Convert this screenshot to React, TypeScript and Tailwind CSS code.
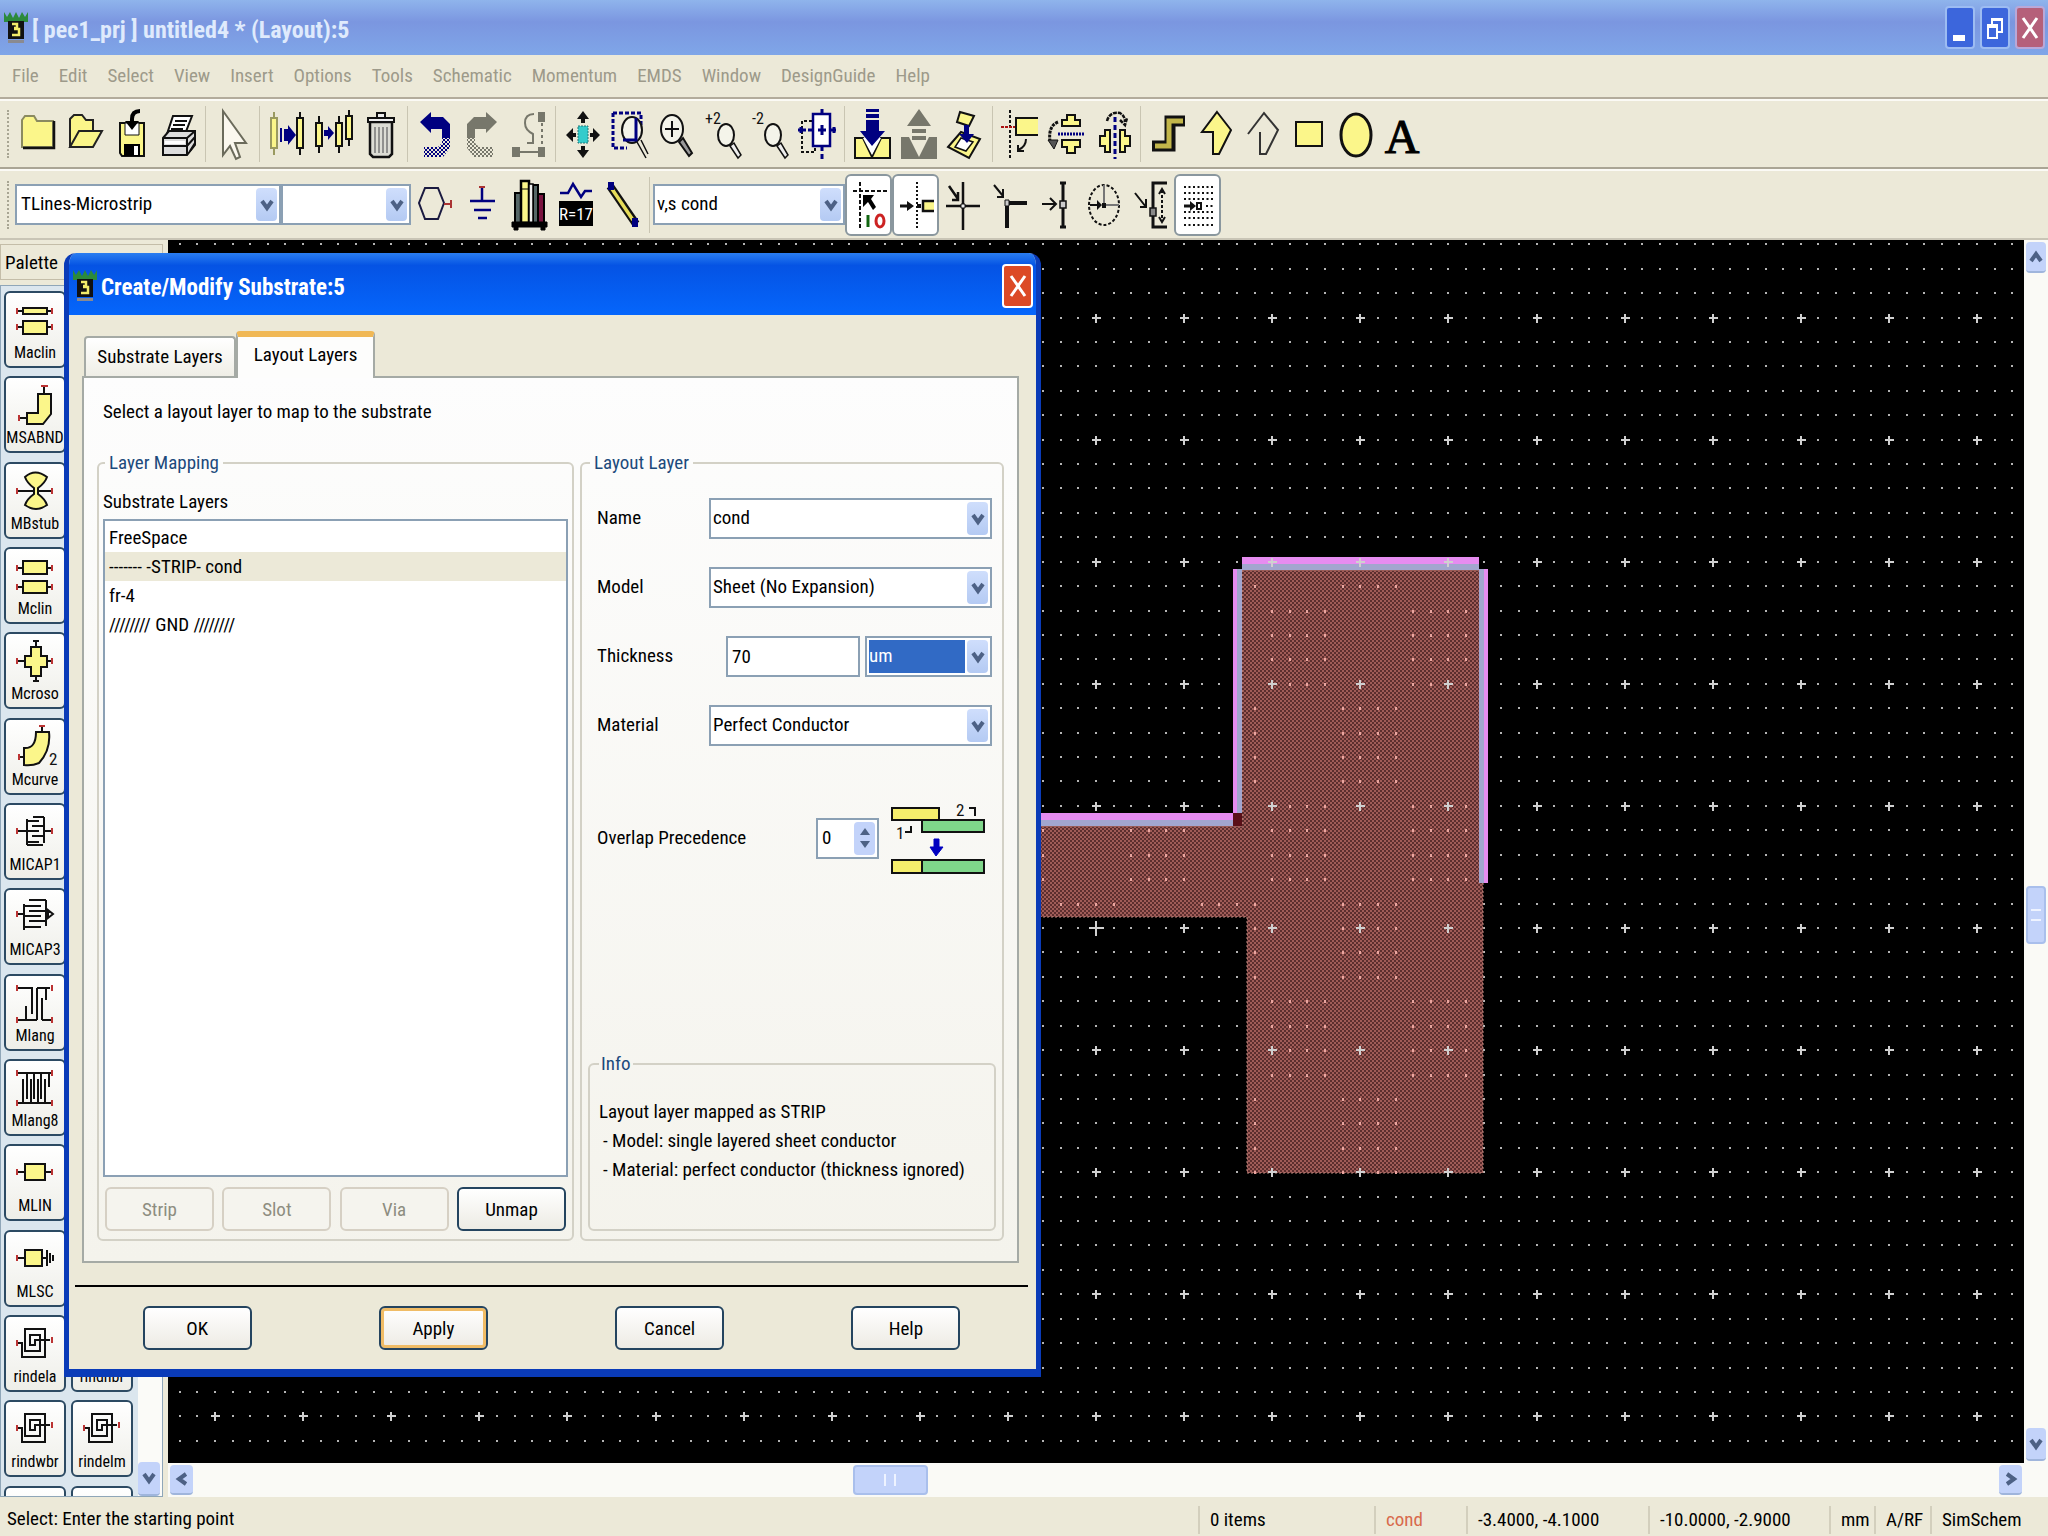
import React from 'react';
import type { ReactNode } from 'react';
import clsx from 'clsx';

const NAVY = '#000080';
const YELLOW = '#fbf68a';
const GREY = '#77776b';

/* ---------- Canvas geometry ---------- */

const STEP_X = 17.62;
const STEP_Y = 24.42;
const ORIGIN_X = 928;
const ORIGIN_Y = 688;

function inMetal(x: number, y: number) {
  const arm = x < 1079 && y > 586 && y < 677;
  const upper = x >= 1074 && x < 1315 && y > 330 && y < 933;
  return arm || upper;
}

function buildGrid() {
  let dots = '';
  let metalDots = '';
  let crosses = '';
  for (let i = -52; i <= 140; i++) {
    for (let j = -28; j <= 60; j++) {
      const x = Math.round(ORIGIN_X + i * STEP_X);
      const y = Math.round(ORIGIN_Y + j * STEP_Y);
      const metal = inMetal(x, y);
      if (i % 5 === 0 && j % 5 === 0) {
        const r = i === 0 && j === 0 ? 7 : 4;
        crosses += `M${x - r} ${y}h${r * 2 + 1}M${x} ${y - r}v${r * 2 + 1}`;
      } else if (metal) {
        const col = Math.floor((i - 10) / 4) % 2 === 0;
        const row = Math.floor((j + 13) / 4) % 2 === 0;
        if (col === row) metalDots += `M${x - 1} ${y - 1}h2v3h-2z`;
      } else {
        dots += `M${x - 1} ${y - 1}h2v2h-2z`;
      }
    }
  }
  return { dots, metalDots, crosses };
}

const GRID = buildGrid();

function LayoutCanvas() {
  return (
    <svg className="block h-full w-full bg-black" role="img" aria-label="Layout view">
      <defs>
        <pattern id="metal" width="4" height="4" patternUnits="userSpaceOnUse">
          <rect width="4" height="4" fill="#5c2e2e" />
          <path d="M0 0h2v2h-2zM2 2h2v2h-2z" fill="#a05c58" />
        </pattern>
        <pattern id="navyDither" width="4" height="4" patternUnits="userSpaceOnUse">
          <path d="M0 0h2v2h-2zM2 2h2v2h-2z" fill={NAVY} />
        </pattern>
        <pattern id="greyDither" width="4" height="4" patternUnits="userSpaceOnUse">
          <path d="M0 0h2v2h-2zM2 2h2v2h-2z" fill={GREY} />
        </pattern>
      </defs>
      <path d={GRID.dots} fill="#b4b4b4" />
      <path
        d="M700 586H1074V330H1315V933H1079V677H700Z"
        fill="url(#metal)"
        stroke="#c08a80"
        strokeDasharray="2 2"
      />
      <path d={GRID.metalDots} fill="#eaa6a0" />
      <path d="M1065 573h9v13h-9z" fill="#5a1018" />
      <path d="M1074 317h237v7h-237zM1065 329h4v244h-4zM700 573h365v7H700zM1316 329h4v314h-4z" fill="#e68cf0" />
      <path d="M1074 324h237v6h-237zM1069 329h5v244h-5zM700 580h365v6H700zM1311 329h5v314h-5z" fill="#a2a6cf" />
      <path d={GRID.crosses} stroke="#d0d0d0" strokeWidth="2" fill="none" />
    </svg>
  );
}

/* ---------- Toolbar icons, each on a 44 x 50 field ---------- */

function Lens({ x, y, rx, ry }: { x: number; y: number; rx: number; ry: number }) {
  return <ellipse cx={x} cy={y} rx={rx} ry={ry} fill="#f4f4ea" stroke="#111" strokeWidth="2" />;
}

const ICONS: Record<string, ReactNode> = {
  new: (
    <>
      <path d="M6 38V11l3-4h9l3 5h16v26z" fill={YELLOW} stroke="#8a8a60" strokeWidth="2" />
      <path d="M7 39h31V12" stroke="#111" strokeWidth="2.5" />
    </>
  ),
  open: (
    <>
      <path d="M7 38V10l4-4h8l4 5h7v10" fill={YELLOW} stroke="#222" strokeWidth="2" />
      <path d="M7 38L16 22H39L30 38Z" fill={YELLOW} stroke="#222" strokeWidth="2" />
    </>
  ),
  save: (
    <>
      <path d="M10 14h24v33H12l-2-3z" fill={YELLOW} stroke="#111" strokeWidth="2" />
      <path d="M15 14h14v12H15z" fill="#fff" stroke="#111" strokeWidth="1" />
      <path d="M14 35h16v12H14z" fill="#000" />
      <path d="M24 37h4v9h-4z" fill="#fff" />
      <path d="M30 2q-8 0-8 8v4" stroke="#000" strokeWidth="4" />
      <path d="M15 12h14l-7 9z" fill="#000" />
    </>
  ),
  print: (
    <>
      <path d="M16 7h19l-7 18H10z" fill="#fff" stroke="#111" strokeWidth="2" />
      <path d="M18 12h12M16 16h12M14 20h12" stroke="#111" strokeWidth="2" />
      <path d="M6 29l6-7h26v14l-8 10H6z" fill="#ddd" stroke="#111" strokeWidth="2" />
      <path d="M6 29h24l8-7M30 29v17M6 37h24l8-9M33 42l5-8" stroke="#111" strokeWidth="2" />
      <path d="M8 32h20v3H8z" fill="#fff" />
    </>
  ),
  select: <path d="M12 2V46l7-9 6 13 4-2-5-14h11z" fill="#fbf8ee" stroke="#6b6b5b" strokeWidth="2" />,
  move: (
    <>
      <path d="M9 3v43" stroke="#9a9a60" strokeWidth="2" />
      <path d="M6 9h6v30H6z" fill={YELLOW} stroke="#9a9a60" strokeWidth="2" />
      <path d="M35 3v43" stroke="#111" strokeWidth="2" />
      <path d="M32 9h6v30h-6z" fill={YELLOW} stroke="#111" strokeWidth="2" />
      <path d="M15 19h2v14h-2zM19 20h4v-4l8 10-8 10v-4h-4z" fill={NAVY} />
    </>
  ),
  copy: (
    <>
      <path d="M7 7v37M27 7v37M37 1v36" stroke="#111" strokeWidth="2" />
      <path d="M4 14h6v23H4zM24 14h6v23h-6zM34 7h6v23h-6z" fill={YELLOW} stroke="#111" strokeWidth="2" />
      <path d="M12 21h4v-4l6 7-6 7v-4h-4z" fill={NAVY} />
    </>
  ),
  trash: (
    <>
      <path d="M11 13h22v32l-3 3H14l-3-3z" fill="#dcdcd4" stroke="#111" strokeWidth="2.5" />
      <path d="M9 9h26v4H9zM18 8V4h8v4" fill="#eee" stroke="#111" strokeWidth="2" />
      <path d="M16 18v26M20 18v26M24 18v26M28 18v26" stroke="#777" strokeWidth="1.5" />
    </>
  ),
  undo: (
    <>
      <path d="M7 13L18 3v5h12l7 7v14h-8v-9H18v4z" fill={NAVY} />
      <path d="M29 28h8v11l-7 9H11V38h14l4-4z" fill="url(#navyDither)" />
    </>
  ),
  redo: (
    <>
      <path d="M37 13L26 3v5H14l-7 7v14h8v-9h11v4z" fill={GREY} />
      <path d="M15 28H7v11l7 9h19V38H19l-4-4z" fill="url(#greyDither)" />
    </>
  ),
  swap: (
    <>
      <path d="M31 3h7v10h-7zM5 38h8v10H5zM31 38h7v10h-7zM13 42h18v2H13z" fill={GREY} />
      <path d="M35 14v24" stroke={GREY} strokeWidth="2" strokeDasharray="3 3" />
      <path d="M27 5q-9 0-9 9 0 7 8 11v9M20 34h6v-7" stroke={GREY} strokeWidth="2" />
    </>
  ),
  fit: (
    <>
      <path d="M17 17h10v17H17z" fill="#3cc" stroke="#277" strokeWidth="1" strokeDasharray="2 1" />
      <path d="M22 2l6 8h-4v4h-4v-4h-4zM22 49l6-8h-4v-4h-4v4h-4zM5 26l7-7v5h3v4h-3v5zM39 26l-7-7v5h-3v4h3v5z" fill="#111" />
    </>
  ),
  zoomArea: (
    <>
      <path d="M5 4h28v12M5 4v35h14" stroke={NAVY} strokeWidth="3" strokeDasharray="4 2" />
      <Lens x={24} y={21} rx={10} ry={13} />
      <path d="M28 9v22H15" stroke={NAVY} strokeWidth="3" />
      <path d="M29 33l9 16M33 31l7 14" stroke="#111" strokeWidth="1.5" />
    </>
  ),
  zoomIn: (
    <>
      <Lens x={17} y={20} rx={11} ry={14} />
      <path d="M10 20h14M17 12v16" stroke="#111" strokeWidth="2" />
      <path d="M24 33l10 14 3-3-9-15z" fill="#999" stroke="#111" strokeWidth="2" />
    </>
  ),
  zoomPlus2: (
    <>
      <text x="3" y="15" fontSize="16" fill="#111">+2</text>
      <Lens x={24} y={26} rx={8} ry={11} />
      <path d="M28 37l8 12 3-3-7-12z" fill="#eee" stroke="#111" strokeWidth="1.5" />
    </>
  ),
  zoomMinus2: (
    <>
      <text x="3" y="15" fontSize="16" fill="#111">-2</text>
      <Lens x={24} y={26} rx={8} ry={11} />
      <path d="M28 37l8 12 3-3-7-12z" fill="#eee" stroke="#111" strokeWidth="1.5" />
    </>
  ),
  pan: (
    <>
      <path d="M16 12H6v31h13v-6" stroke="#111" strokeWidth="2" strokeDasharray="3 2" />
      <path d="M17 5h17v32H17z" fill="#fff" stroke={NAVY} strokeWidth="2.5" />
      <path d="M2 21h8M12 21h5M22 21h8M34 21h6M26 16v10M26 0v5M26 38v4M26 45v5M5 18v6M38 18v6" stroke={NAVY} strokeWidth="3" />
    </>
  ),
  push: (
    <>
      <path d="M5 29h8l9 19 9-19h9v20H5z" fill={YELLOW} stroke="#111" strokeWidth="2" />
      <path d="M13 29h18l-9 17z" fill="#fff" />
      <path d="M16 0h13v3H16zM16 5h13v4H16zM16 11h13v11h6L22 37 10 22h6z" fill={NAVY} />
    </>
  ),
  pop: (
    <>
      <path d="M4 28h8l10 20 10-20h8v22H4z" fill={GREY} />
      <path d="M22 0l12 17H10zM15 20h14v4H15zM15 27h14v4H15z" fill={GREY} />
    </>
  ),
  peek: (
    <>
      <path d="M17 23l19 7-11 19L4 38z" fill={YELLOW} stroke="#111" strokeWidth="2" />
      <path d="M17 29l12 4-7 9-11-4z" fill="#fff" stroke="#111" strokeWidth="1.5" />
      <path d="M16 3l14 4-5 10-12-4z" fill={YELLOW} stroke="#111" strokeWidth="2" />
      <path d="M20 16h5v9h5l-7 9-8-9h5z" fill={NAVY} />
    </>
  ),
  rotate: (
    <>
      <path d="M12 1v48" stroke="#111" strokeWidth="2" strokeDasharray="3 2" />
      <path d="M40 9H18v17h22" fill={YELLOW} stroke="#111" strokeWidth="2" />
      <path d="M3 18h14" stroke="#a11" strokeWidth="2" strokeDasharray="3 1" />
      <path d="M28 30q0 8-8 11M20 36v6h6" stroke="#111" strokeWidth="2" />
    </>
  ),
  flipV: (
    <>
      <path d="M22 6h8v5h5v6H17v-6h5zM17 31h18v7h-5v6h-8v-6h-5z" fill={YELLOW} stroke="#111" strokeWidth="2" />
      <path d="M13 25h27" stroke={NAVY} strokeWidth="3" strokeDasharray="2 1" />
      <path d="M13 13Q3 17 5 32" stroke="#111" strokeWidth="3" strokeDasharray="3 1" />
      <path d="M3 31h10l-4 9z" fill="#555" stroke="#111" />
    </>
  ),
  flipH: (
    <>
      <path d="M18 21v22h-5v-6H8V27h5v-6zM28 21v22h5v-6h5V27h-5v-6z" fill={YELLOW} stroke="#111" strokeWidth="2" />
      <path d="M23 8v42" stroke={NAVY} strokeWidth="3" strokeDasharray="5 3" />
      <path d="M15 12Q18 2 28 4q5 3 5 9M28 11l5 5 2-7" stroke="#111" strokeWidth="2.5" strokeDasharray="4 1" />
    </>
  ),
  trace: (
    <>
      <path d="M39 12H24v25H6" stroke="#111" strokeWidth="11" />
      <path d="M37 12H23v25H9" stroke="#c2b64a" strokeWidth="5" />
    </>
  ),
  polygon: <path d="M24 3L38 21 26 45h-6V23H9z" fill={YELLOW} stroke="#111" strokeWidth="2" />,
  polyline: <path d="M8 25L24 4 38 21 26 45h-6V23" stroke="#333" strokeWidth="2" />,
  rectangle: <path d="M9 13h26v24H9z" fill={YELLOW} stroke="#111" strokeWidth="2" />,
  circle: <ellipse cx="22" cy="26" rx="15" ry="21" fill={YELLOW} stroke="#111" strokeWidth="3" />,
  text: (
    <text x="21" y="44" fontSize="48" textAnchor="middle" fill="#000" stroke="#000" className='font-["Liberation_Serif",serif]'>
      A
    </text>
  ),
  port: (
    <>
      <path d="M12 8h13l6 15-6 16H12L6 23z" stroke="#1a1a40" strokeWidth="2" />
      <path d="M31 24h7M38 20v8" stroke="#a33" strokeWidth="2" />
    </>
  ),
  ground: (
    <>
      <path d="M22 7v14M10 21h25M14 30h17M18 38h9" stroke={NAVY} strokeWidth="2.5" />
      <path d="M19 7h6" stroke="#a33" strokeWidth="2" />
    </>
  ),
  library: (
    <>
      <path d="M8 13h6v30H8zM26 5h5v38h-5z" fill="#566" stroke="#000" strokeWidth="2" />
      <path d="M14 1h8v42h-8z" fill={YELLOW} stroke="#000" strokeWidth="2.5" />
      <path d="M22 4h4v39h-4z" fill="#eee" stroke="#000" strokeWidth="1.5" />
      <path d="M31 14h6v29h-6z" fill="#7a1440" stroke="#000" strokeWidth="2" />
      <path d="M14 9h8M5 42h35v5H5zM7 47h4v3H7zM34 47h4v3h-4z" fill="#000" stroke="#000" />
    </>
  ),
  variable: (
    <>
      <path d="M6 13h8l5-9 8 13 4-6h7" stroke={NAVY} strokeWidth="2.5" />
      <path d="M5 21h34v25H5z" fill="#000" />
      <text x="22" y="40" fontSize="17" textAnchor="middle" fill="#fff">R=17</text>
    </>
  ),
  wire: (
    <>
      <path d="M9 6l26 38" stroke="#111" strokeWidth="8" />
      <path d="M11 9l21 31" stroke="#e6dc5a" strokeWidth="3.5" />
      <path d="M7 2h6v8H7zM31 38h6v9h-6z" fill={NAVY} />
    </>
  ),
  snap: (
    <>
      <path d="M13 2v48M6 11h36" stroke="#111" strokeWidth="2" strokeDasharray="4 2" />
      <path d="M16 15h11l-3 4 5 8-3 3-5-8-5 5z" fill="#000" />
      <path d="M21 35v12" stroke="#161" strokeWidth="3" />
      <ellipse cx="33" cy="41" rx="4" ry="6" stroke="#c22" strokeWidth="3" />
    </>
  ),
  snapPin: (
    <>
      <path d="M23 2v48" stroke="#111" strokeWidth="2" strokeDasharray="2 2" />
      <path d="M6 26h10" stroke="#111" strokeWidth="3" />
      <path d="M13 21l7 5-7 5zM23 24h4v4h-4z" fill="#111" />
      <path d="M40 21H29v10h11" fill={YELLOW} stroke="#111" strokeWidth="2.5" />
    </>
  ),
  snapMid: (
    <>
      <path d="M22 2v48M5 26h34M8 6l9 13M17 12v8h-6" stroke="#111" strokeWidth="2.5" />
      <path d="M20 24h4v4h-4z" fill="#eee" stroke="#111" />
    </>
  ),
  snapVertex: (
    <>
      <path d="M19 48V23h20" stroke="#111" strokeWidth="4" />
      <path d="M6 5l9 11M15 9v8H9" stroke="#111" strokeWidth="2" />
      <path d="M17 20h4v6h-4z" fill="#ccc" stroke="#111" />
    </>
  ),
  snapEdge: (
    <>
      <path d="M28 3v44M25 3h6M25 47h6" stroke="#111" strokeWidth="3" />
      <path d="M7 24h13M15 18l6 6-6 6" stroke="#111" strokeWidth="2" />
      <path d="M25 21h6v7h-6z" fill="#ccc" stroke="#111" strokeWidth="1.5" />
    </>
  ),
  snapArc: (
    <>
      <ellipse cx="22" cy="25" rx="15" ry="20" stroke="#111" strokeWidth="2" strokeDasharray="3 2" />
      <path d="M22 5v20h15" stroke="#777" strokeWidth="2" />
      <path d="M8 24h7v-4l5 5-5 5v-4H8zM20 23h4v5h-4z" fill="#111" />
    </>
  ),
  snapMeasure: (
    <>
      <path d="M38 3H24v44h14" stroke="#111" strokeWidth="3" />
      <path d="M33 10v30" stroke="#111" strokeWidth="2" strokeDasharray="3 2" />
      <path d="M30 14l3-5 3 5M30 37l3 5 3-5M6 13l11 14M17 19v8h-6" stroke="#111" strokeWidth="2" />
      <path d="M21 28h6v8h-6z" fill="#888" stroke="#111" strokeWidth="1.5" />
    </>
  ),
  snapGrid: (
    <>
      <path
        d="M8 7h29M8 13h29M8 19h29M8 32h29M8 38h29M8 45h29M30 26h7"
        stroke="#111"
        strokeWidth="2"
        strokeDasharray="2 2.5"
      />
      <path d="M8 26h8" stroke="#111" strokeWidth="3" />
      <path d="M14 21l6 5-6 5z" fill="#111" />
      <path d="M21 23h4v6h-4z" stroke="#111" strokeWidth="2" />
    </>
  ),
};

function ToolButton({ name, active = false }: { name: string; active?: boolean }) {
  return (
    <button
      type="button"
      aria-label={name}
      className={clsx(
        'flex w-[47px] shrink-0 items-center justify-center',
        active && 'h-[62px] rounded-md border-2 border-[#8a979e] bg-white',
      )}
    >
      <svg width="44" height="50" viewBox="0 0 44 50" fill="none" className="shrink-0 overflow-visible">
        {ICONS[name]}
      </svg>
    </button>
  );
}

function Separator() {
  return <span className="mx-[3px] h-14 w-px shrink-0 bg-[#c9c5b2]" />;
}

function Grip() {
  return <span className="ml-[7px] h-12 w-0 shrink-0 border-l-2 border-dotted border-[#a8a593]" />;
}

const MAIN_TOOLS = [
  ['new', 'open', 'save', 'print'],
  ['select'],
  ['move', 'copy', 'trash'],
  ['undo', 'redo', 'swap'],
  ['fit', 'zoomArea', 'zoomIn', 'zoomPlus2', 'zoomMinus2', 'pan'],
  ['push', 'pop', 'peek'],
  ['rotate', 'flipV', 'flipH'],
  ['trace', 'polygon', 'polyline', 'rectangle', 'circle', 'text'],
];

/* ---------- Shared controls ---------- */

function Chevron({ className }: { className?: string }) {
  return (
    <svg width="14" height="14" viewBox="0 0 14 14" fill="none" className={className}>
      <path d="M2 3l5 7 5-7" stroke="#4d6185" strokeWidth="4" />
    </svg>
  );
}

function Combo({
  id,
  label,
  value,
  className,
  selected = false,
}: {
  id: string;
  label?: string;
  value: string;
  className?: string;
  selected?: boolean;
}) {
  return (
    <div className={clsx('flex h-[41px] border-2 border-[#8ba0b4] bg-white p-0.5', className)}>
      <select
        id={id}
        aria-label={label}
        defaultValue={value}
        className={clsx('min-w-0 flex-1 appearance-none outline-none', selected && 'bg-[#316ac5] text-white')}
      >
        <option>{value}</option>
      </select>
      <span className="ml-0.5 flex w-[21px] items-center justify-center rounded-sm bg-linear-to-b from-[#cfdefc] to-[#b4caf3]">
        <Chevron />
      </span>
    </div>
  );
}

function ScrollButton({ label, turn, className }: { label: string; turn?: string; className?: string }) {
  return (
    <button
      type="button"
      aria-label={label}
      className={clsx(
        'flex shrink-0 items-center justify-center rounded-sm border-b-2 border-[#9fb5dc] bg-[#c3d3fa]',
        className,
      )}
    >
      <Chevron className={turn} />
    </button>
  );
}

function PushButton({ children, disabled, focused }: { children: ReactNode; disabled?: boolean; focused?: boolean }) {
  return (
    <button
      type="button"
      disabled={disabled}
      className={clsx(
        'h-11 w-[109px] rounded-md border-2 pt-0.5',
        disabled && 'border-[#d6d0c4] bg-[#f5f4ee] text-[#8d8d80]',
        !disabled && 'border-[#24445f] bg-linear-to-b from-white to-[#edebe4]',
        focused && 'border-[#6b5a33] shadow-[inset_0_0_0_3px_#f0bc66]',
      )}
    >
      {children}
    </button>
  );
}

function Logo() {
  return (
    <svg width="24" height="34" viewBox="0 0 24 34" fill="none" className="shrink-0">
      <path d="M0 1l3 5 3-5 3 6 3-6 3 6 3-6 3 5 3-5v10H0z" fill="#2c8a3c" />
      <path d="M4 10h16v18H4z" fill="#111" />
      <path d="M8 13h5v4h-3M10 18h5v6H8" stroke="#f3ec6a" strokeWidth="2.5" />
      <path d="M4 29h16v3H4z" fill="#8a8a90" />
    </svg>
  );
}

/* ---------- Window chrome ---------- */

function TitleBar() {
  return (
    <header className="flex h-[55px] shrink-0 items-center bg-linear-to-b from-[#8fb4ec] via-[#7b96e0] via-40% to-[#7fa6e8] pr-[3px] pl-1">
      <Logo />
      <h1 className="ml-1 flex-1 pt-1 text-[24px] font-bold text-[#dfeafc]">[ pec1_prj ] untitled4 * (Layout):5</h1>
      <div className="flex gap-[5px]">
        <button type="button" aria-label="Minimize" className="h-[43px] w-[30px] rounded border-2 border-[#9dbcf2] bg-[#3c66dc]">
          <span className="mt-5 ml-1.5 block h-1.5 w-3 bg-white" />
        </button>
        <button
          type="button"
          aria-label="Restore"
          className="flex h-[43px] w-[30px] items-center justify-center rounded border-2 border-[#9dbcf2] bg-[#3c66dc]"
        >
          <svg width="18" height="24" viewBox="0 0 18 24" fill="none" stroke="#fff" strokeWidth="2">
            <path d="M6 8V3h10v13h-4M6 4h10M2 9h9v13H2zM2 11h9" />
          </svg>
        </button>
        <button
          type="button"
          aria-label="Close"
          className="flex h-[43px] w-[30px] items-center justify-center rounded border-2 border-[#b9a8d8] bg-[#b5607a]"
        >
          <CloseGlyph />
        </button>
      </div>
    </header>
  );
}

function CloseGlyph() {
  return (
    <svg width="18" height="24" viewBox="0 0 18 24" fill="none" stroke="#fff" strokeWidth="3">
      <path d="M2 2l14 20M16 2L2 22" />
    </svg>
  );
}

const MENUS = [
  'File', 'Edit', 'Select', 'View', 'Insert', 'Options', 'Tools', 'Schematic',
  'Momentum', 'EMDS', 'Window', 'DesignGuide', 'Help',
];

function MenuBar() {
  return (
    <nav className="flex h-11 shrink-0 items-center gap-5 border-b-2 border-[#b3ac9c] pl-3 text-[#9d9a8a]">
      {MENUS.map((m) => (
        <button key={m} type="button">
          {m}
        </button>
      ))}
    </nav>
  );
}

function Toolbars() {
  return (
    <>
      <div className="flex h-[70px] shrink-0 items-center border-t-2 border-b-2 border-t-[#fbfaf5] border-b-[#aaa595]">
        <Grip />
        <span className="w-[5px]" />
        {MAIN_TOOLS.map((group, i) => (
          <React.Fragment key={group[0]}>
            {i > 0 && <Separator />}
            {group.map((t) => (
              <ToolButton key={t} name={t} />
            ))}
          </React.Fragment>
        ))}
      </div>
      <div className="flex h-[71px] shrink-0 items-center border-t-2 border-b-2 border-t-[#fbfaf5] border-b-[#c9c5b6]">
        <Grip />
        <Combo id="palette-group" label="Palette" value="TLines-Microstrip" className="ml-1.5 w-[266px] shrink-0 pl-1" />
        <Combo id="component" label="Component" value="" className="w-[130px] shrink-0" />
        <div className="flex shrink-0">
          {['port', 'ground', 'library', 'variable', 'wire'].map((t) => (
            <ToolButton key={t} name={t} />
          ))}
        </div>
        <Separator />
        <Combo id="entry-layer" label="Entry layer" value="v,s cond" className="w-[192px] shrink-0" />
        <ToolButton name="snap" active />
        <ToolButton name="snapPin" active />
        <div className="flex shrink-0 gap-0 pr-0">
          {['snapMid', 'snapVertex', 'snapEdge', 'snapArc', 'snapMeasure'].map((t) => (
            <ToolButton key={t} name={t} />
          ))}
        </div>
        <ToolButton name="snapGrid" active />
      </div>
    </>
  );
}

/* ---------- Component palette, each glyph on a 40 x 44 field ---------- */

function Leads({ y, left = 8, right = 32 }: { y: number; left?: number; right?: number }) {
  return (
    <>
      <path d={`M3 ${y}H${left}M${right} ${y}H37`} stroke="#111" strokeWidth="2" />
      <path d={`M2 ${y - 3}v6M37 ${y - 3}v6`} stroke="#b33" strokeWidth="2" />
    </>
  );
}

const box = { fill: YELLOW, stroke: '#111', strokeWidth: 2 };
const line = { stroke: '#111', strokeWidth: 2 };

const spiral = (
  <>
    <path d="M3 22H7V36H30V8H10V30H25V14H15V24H20V19H35" {...line} />
    <path d="M2 19v6M37 16v6" stroke="#b33" strokeWidth="2" />
  </>
);

const GLYPHS: Record<string, ReactNode> = {
  Maclin: (
    <>
      <Leads y={14} />
      <Leads y={30} />
      <path d="M8 11h24v6H8zM8 24h24v13H8z" {...box} />
    </>
  ),
  MSABND: (
    <>
      <path d="M23 12h13v20l-8 10H12V31h11z" {...box} />
      <path d="M29 4v8M4 36h8" {...line} />
      <path d="M26 4h7M4 33v6" stroke="#b33" strokeWidth="2" />
    </>
  ),
  MBstub: (
    <>
      <Leads y={23} left={18} right={22} />
      <path d="M10 9q10-9 22 0-2 6-9 11v6q7 5 9 11-11 8-22 0 2-6 9-11v-6q-7-5-9-11z" {...box} />
    </>
  ),
  Mclin: (
    <>
      <Leads y={15} />
      <Leads y={34} />
      <path d="M8 8h24v13H8zM8 28h24v12H8z" {...box} />
    </>
  ),
  Mcroso: (
    <>
      <Leads y={23} left={11} right={31} />
      <path d="M16 9h10v9h6v11h-6v9H16v-9h-6V18h6z" {...box} />
      <path d="M21 3v6M21 38v5M18 3h6M18 43h6" {...line} />
    </>
  ),
  Mcurve: (
    <>
      <path d="M21 8h13q2 18-10 31-7 3-15 2V24q12 1 12-16z" {...box} />
      <path d="M27 2v6M4 33h5" {...line} />
      <path d="M24 2h6M4 30v6" stroke="#b33" strokeWidth="2" />
      <text x="34" y="41" fontSize="17" fill="#111">2</text>
    </>
  ),
  MICAP1: (
    <>
      <Leads y={22} left={12} right={29} />
      <path d="M12 10v26M29 8v26M12 12h12M17 17h12M12 22h12M17 27h12M12 33h12M18 8h11M12 36h16" {...line} />
    </>
  ),
  MICAP3: (
    <>
      <path d="M3 20h6M9 10v26M31 6v26M14 6h17M9 12h17M14 17h17M9 22h17M14 27h17M9 33h17M31 20h2M33 16v8l5-4z" {...line} />
      <path d="M2 17v6" stroke="#b33" strokeWidth="2" />
    </>
  ),
  Mlang: (
    <>
      <path d="M3 8h14v26M22 40V8M22 8h13M3 40h19M27 40h9M11 40V26M27 40V18M31 8v12" {...line} />
      <path d="M2 5v6M37 5v6M2 37v6M37 37v6" stroke="#b33" strokeWidth="2" />
    </>
  ),
  Mlang8: (
    <>
      <path d="M3 8h34M3 38h34M8 38V14M12 8v26M16 38V14M19 8v26M23 38V14M26 8v26M30 38V14M34 8v14" {...line} />
      <path d="M2 5v6M37 5v6M2 35v6M37 35v6" stroke="#b33" strokeWidth="2" />
    </>
  ),
  MLIN: (
    <>
      <Leads y={22} left={10} right={30} />
      <path d="M10 14h20v16H10z" {...box} />
    </>
  ),
  MLSC: (
    <>
      <path d="M3 22h7M28 22h4M32 14v16M35 17v10M38 19v6" {...line} />
      <path d="M2 19v6" stroke="#b33" strokeWidth="2" />
      <path d="M10 14h17v16H10z" {...box} />
    </>
  ),
  rindela: spiral,
  rindnbr: spiral,
  rindwbr: spiral,
  rindelm: spiral,
};

const PALETTE_ROWS: [string, string?][] = [
  ['Maclin'], ['MSABND'], ['MBstub'], ['Mclin'], ['Mcroso'], ['Mcurve'], ['MICAP1'], ['MICAP3'],
  ['Mlang'], ['Mlang8'], ['MLIN'], ['MLSC'], ['rindela', 'rindnbr'], ['rindwbr', 'rindelm'], ['', ''],
];

function PaletteButton({ name }: { name: string }) {
  return (
    <button
      type="button"
      aria-label={name || 'More'}
      className="flex h-[77px] w-[62px] flex-col items-center rounded-md border-2 border-[#2c4a63] bg-linear-to-b from-white to-[#eeeee8] pt-1 text-[16px] leading-6"
    >
      <svg width="40" height="44" viewBox="0 0 40 44" fill="none" className="shrink-0 overflow-visible">
        {GLYPHS[name]}
      </svg>
      {name}
    </button>
  );
}

function Palette() {
  return (
    <aside className="flex w-[168px] shrink-0 flex-col overflow-hidden">
      <h2 className="mt-1 mr-[5px] mb-[5px] flex h-9 shrink-0 items-center border border-[#c4bda8] pt-0.5 pl-1">Palette</h2>
      <div className="mr-[5px] flex min-h-0 flex-1 border border-[#8fa6b8] bg-[#dbe6ee]">
        <div className="h-full flex-1 overflow-hidden pt-[5px] pl-[3px]">
          <div className="flex h-[1272px] flex-col justify-between">
            {PALETTE_ROWS.map((row, i) => (
              <div key={i} className="flex gap-[5px]">
                {row.map((name, j) => (
                  <PaletteButton key={j} name={name ?? ''} />
                ))}
              </div>
            ))}
          </div>
        </div>
        <div className="flex w-6 flex-col justify-end bg-[#fbfbf8]">
          <ScrollButton label="Scroll palette down" className="h-[34px] w-[22px]" />
        </div>
      </div>
    </aside>
  );
}

/* ---------- Substrate dialog ---------- */

const GROUP = 'min-w-0 rounded-md border-2 border-[#d3d1c6]';
const LEGEND = 'ml-0.5 px-1 leading-6 text-[#1c4a7c]';

function OverlapDiagram() {
  return (
    <svg width="94" height="74" viewBox="0 0 94 74" fill="none" className="overflow-visible">
      <path d="M1 7h47v12H1zM1 59h31v13H1z" fill="#f5ee6c" stroke="#111" strokeWidth="2" />
      <path d="M31 19h62v12H31zM31 59h62v13H31z" fill="#7fd68a" stroke="#111" strokeWidth="2" />
      <path d="M43 38h5v8h4l-7 9-6-9h4z" fill="#0000c0" stroke="#0000c0" />
      <text x="5" y="38" fontSize="17" fill="#111">1</text>
      <text x="65" y="15" fontSize="17" fill="#111">2</text>
      <path d="M14 31h6v-6M78 7h6v8" stroke="#111" strokeWidth="2" />
    </svg>
  );
}

function LayerMapping() {
  const layers = ['FreeSpace', '------- -STRIP- cond', 'fr-4', '//////// GND ////////'];
  return (
    <fieldset className={clsx(GROUP, 'w-[477px] px-1 pb-2')}>
      <legend className={LEGEND}>Layer Mapping</legend>
      <p id="layers-label" className="pt-3 leading-[29px]">Substrate Layers</p>
      <ul aria-labelledby="layers-label" className="mt-[3px] h-[658px] border-2 border-[#8ba0b4] bg-white py-0.5">
        {layers.map((l, i) => (
          <li key={l} className={clsx('px-1 leading-[29px]', i === 1 && 'bg-[#ece9d8]')}>
            {l}
          </li>
        ))}
      </ul>
      <div className="mt-2.5 flex justify-between px-0.5">
        <PushButton disabled>Strip</PushButton>
        <PushButton disabled>Slot</PushButton>
        <PushButton disabled>Via</PushButton>
        <PushButton>Unmap</PushButton>
      </div>
    </fieldset>
  );
}

function Field({ label, id, children }: { label: string; id: string; children: ReactNode }) {
  return (
    <div className="flex items-center justify-between">
      <label htmlFor={id}>{label}</label>
      {children}
    </div>
  );
}

function LayoutLayer() {
  return (
    <fieldset className={clsx(GROUP, 'flex flex-1 flex-col px-1.5 pb-2')}>
      <legend className={LEGEND}>Layout Layer</legend>
      <div className="flex flex-col gap-7 pt-[23px] pr-1 pl-[9px]">
        <Field label="Name" id="layer-name">
          <Combo id="layer-name" value="cond" className="w-[283px]" />
        </Field>
        <Field label="Model" id="layer-model">
          <Combo id="layer-model" value="Sheet (No Expansion)" className="w-[283px]" />
        </Field>
        <Field label="Thickness" id="layer-thickness">
          <div className="flex gap-[5px]">
            <input
              id="layer-thickness"
              type="text"
              defaultValue="70"
              className="h-[41px] w-[134px] border-2 border-[#8ba0b4] bg-white px-1"
            />
            <Combo id="layer-unit" label="Thickness unit" value="um" selected className="w-[127px]" />
          </div>
        </Field>
        <Field label="Material" id="layer-material">
          <Combo id="layer-material" value="Perfect Conductor" className="w-[283px]" />
        </Field>
      </div>
      <div className="mt-[55px] flex items-center pr-[11px] pl-[9px]">
        <label htmlFor="precedence" className="flex-1">Overlap Precedence</label>
        <div className="mr-3 flex h-[41px] w-[63px] border-2 border-[#8ba0b4] bg-white p-0.5">
          <input id="precedence" type="text" defaultValue="0" className="w-[34px] pl-0.5" />
          <span className="flex flex-1 flex-col items-center justify-center gap-1 rounded-sm bg-[#c3d3fa] text-[#4d6185]">
            <svg width="12" height="9" viewBox="0 0 12 9"><path d="M1 8l5-7 5 7z" fill="currentColor" /></svg>
            <svg width="12" height="9" viewBox="0 0 12 9"><path d="M1 1l5 7 5-7z" fill="currentColor" /></svg>
          </span>
        </div>
        <OverlapDiagram />
      </div>
      <fieldset className={clsx(GROUP, 'mt-auto h-[179px] px-[9px] pt-[21px]')}>
        <legend className="px-0.5 leading-6 text-[#1c4a7c]">Info</legend>
        <p className="leading-[29px]">Layout layer mapped as STRIP</p>
        <p className="pl-1 leading-[29px]">- Model: single layered sheet conductor</p>
        <p className="pl-1 leading-[29px]">- Material: perfect conductor (thickness ignored)</p>
      </fieldset>
    </fieldset>
  );
}

function SubstrateDialog() {
  return (
    <section
      role="dialog"
      aria-labelledby="dialog-title"
      className="absolute top-[253px] left-16 w-[977px] overflow-hidden rounded-t-xl border-x-[5px] border-b-8 border-[#0a3bb8] bg-[#ece9d8]"
    >
      <div className="-mx-[5px] flex h-[62px] items-center bg-linear-to-b from-[#2a7df0] via-[#0553e4] via-20% to-[#0566fc] pt-1 pr-2 pl-[9px]">
        <Logo />
        <h2 id="dialog-title" className="ml-1 flex-1 pt-1 text-[23px] font-bold text-white">Create/Modify Substrate:5</h2>
        <button
          type="button"
          aria-label="Close dialog"
          className="flex h-11 w-[31px] items-center justify-center rounded border-2 border-white bg-[#dc4a26]"
        >
          <CloseGlyph />
        </button>
      </div>

      <div className="px-[13px] pt-4">
        <div role="tablist" className="flex items-end pl-0.5">
          <button
            type="button"
            role="tab"
            aria-selected="false"
            className="h-10 w-[152px] rounded-t border-2 border-b-0 border-[#a5aaa5] bg-linear-to-b from-white to-[#efeee6]"
          >
            Substrate Layers
          </button>
          <button
            type="button"
            role="tab"
            aria-selected="true"
            className="relative z-10 -mb-0.5 h-[47px] w-[139px] rounded-t border-x-2 border-t-[6px] border-x-[#a5aaa5] border-t-[#f0b855] bg-[#fdfdfc] pb-1"
          >
            Layout Layers
          </button>
        </div>
        <div
          role="tabpanel"
          className="mr-1 border-2 border-[#a5aaa5] bg-linear-to-b from-[#fdfdfd] to-[#f4f3ec] px-[13px] pt-[19px] pb-5"
        >
          <p className="pl-1.5 leading-[29px]">Select a layout layer to map to the substrate</p>
          <div className="mt-[25px] flex gap-1.5">
            <LayerMapping />
            <LayoutLayer />
          </div>
        </div>
      </div>

      <div className="mt-[22px] mr-2 ml-[6px] h-0.5 bg-black" />
      <div className="grid grid-cols-4 justify-items-center pt-[19px] pr-3 pb-[19px] pl-2.5">
        <PushButton>OK</PushButton>
        <PushButton focused>Apply</PushButton>
        <PushButton>Cancel</PushButton>
        <PushButton>Help</PushButton>
      </div>
    </section>
  );
}

/* ---------- Status bar ---------- */

function StatusBar() {
  const cell = 'shrink-0 border-l-2 border-[#d3cfbd] pl-2.5 leading-7';
  return (
    <footer className="flex h-[39px] shrink-0 items-center pt-1.5 pl-[7px]">
      <span className="flex-1">Select: Enter the starting point</span>
      <span className={clsx(cell, 'w-[176px]')}>0 items</span>
      <span className={clsx(cell, 'w-[92px]')}>
        <span className="text-[#d8694c]">cond</span>
      </span>
      <span className={clsx(cell, 'w-[182px]')}>-3.4000, -4.1000</span>
      <span className={clsx(cell, 'w-[181px]')}>-10.0000, -2.9000</span>
      <span className={clsx(cell, 'w-[45px]')}>mm</span>
      <span className={clsx(cell, 'w-[56px]')}>A/RF</span>
      <span className={clsx(cell, 'w-[118px]')}>SimSchem</span>
    </footer>
  );
}

export default function App() {
  return (
    <div className='relative flex h-screen w-full flex-col overflow-hidden bg-[#ece9d8] font-["Roboto_Condensed","Roboto",sans-serif] text-[19px] text-black'>
      <TitleBar />
      <MenuBar />
      <Toolbars />

      <main className="flex min-h-0 flex-1">
        <Palette />
        <div className="flex min-w-0 flex-1 flex-col">
          <div className="min-h-0 flex-1">
            <LayoutCanvas />
          </div>
          <div className="flex h-[34px] shrink-0 items-center justify-between bg-[#fafaf6] px-0.5">
            <ScrollButton label="Scroll left" turn="rotate-90" className="h-[30px] w-[23px]" />
            <button
              type="button"
              aria-label="Horizontal scroll thumb"
              className="mr-[412px] flex h-[30px] w-[75px] items-center justify-center rounded-sm border-2 border-[#a9bfec] bg-[#c3d3fa]"
            >
              <span className="h-3 w-3 border-x-2 border-[#eef3ff]" />
            </button>
            <ScrollButton label="Scroll right" turn="-rotate-90" className="h-[30px] w-[23px]" />
          </div>
        </div>
        <div className="flex w-[24px] shrink-0 flex-col items-center justify-between bg-[#fafaf6] py-0.5">
          <ScrollButton label="Scroll up" turn="rotate-180" className="h-[31px] w-5" />
          <button
            type="button"
            aria-label="Vertical scroll thumb"
            className="mt-[128px] flex h-[58px] w-5 items-center justify-center rounded-sm border-2 border-[#a9bfec] bg-[#c3d3fa]"
          >
            <span className="h-3 w-2.5 border-y-2 border-[#eef3ff]" />
          </button>
          <ScrollButton label="Scroll down" className="mb-[34px] h-[33px] w-5" />
        </div>
      </main>

      <StatusBar />
      <SubstrateDialog />
    </div>
  );
}
